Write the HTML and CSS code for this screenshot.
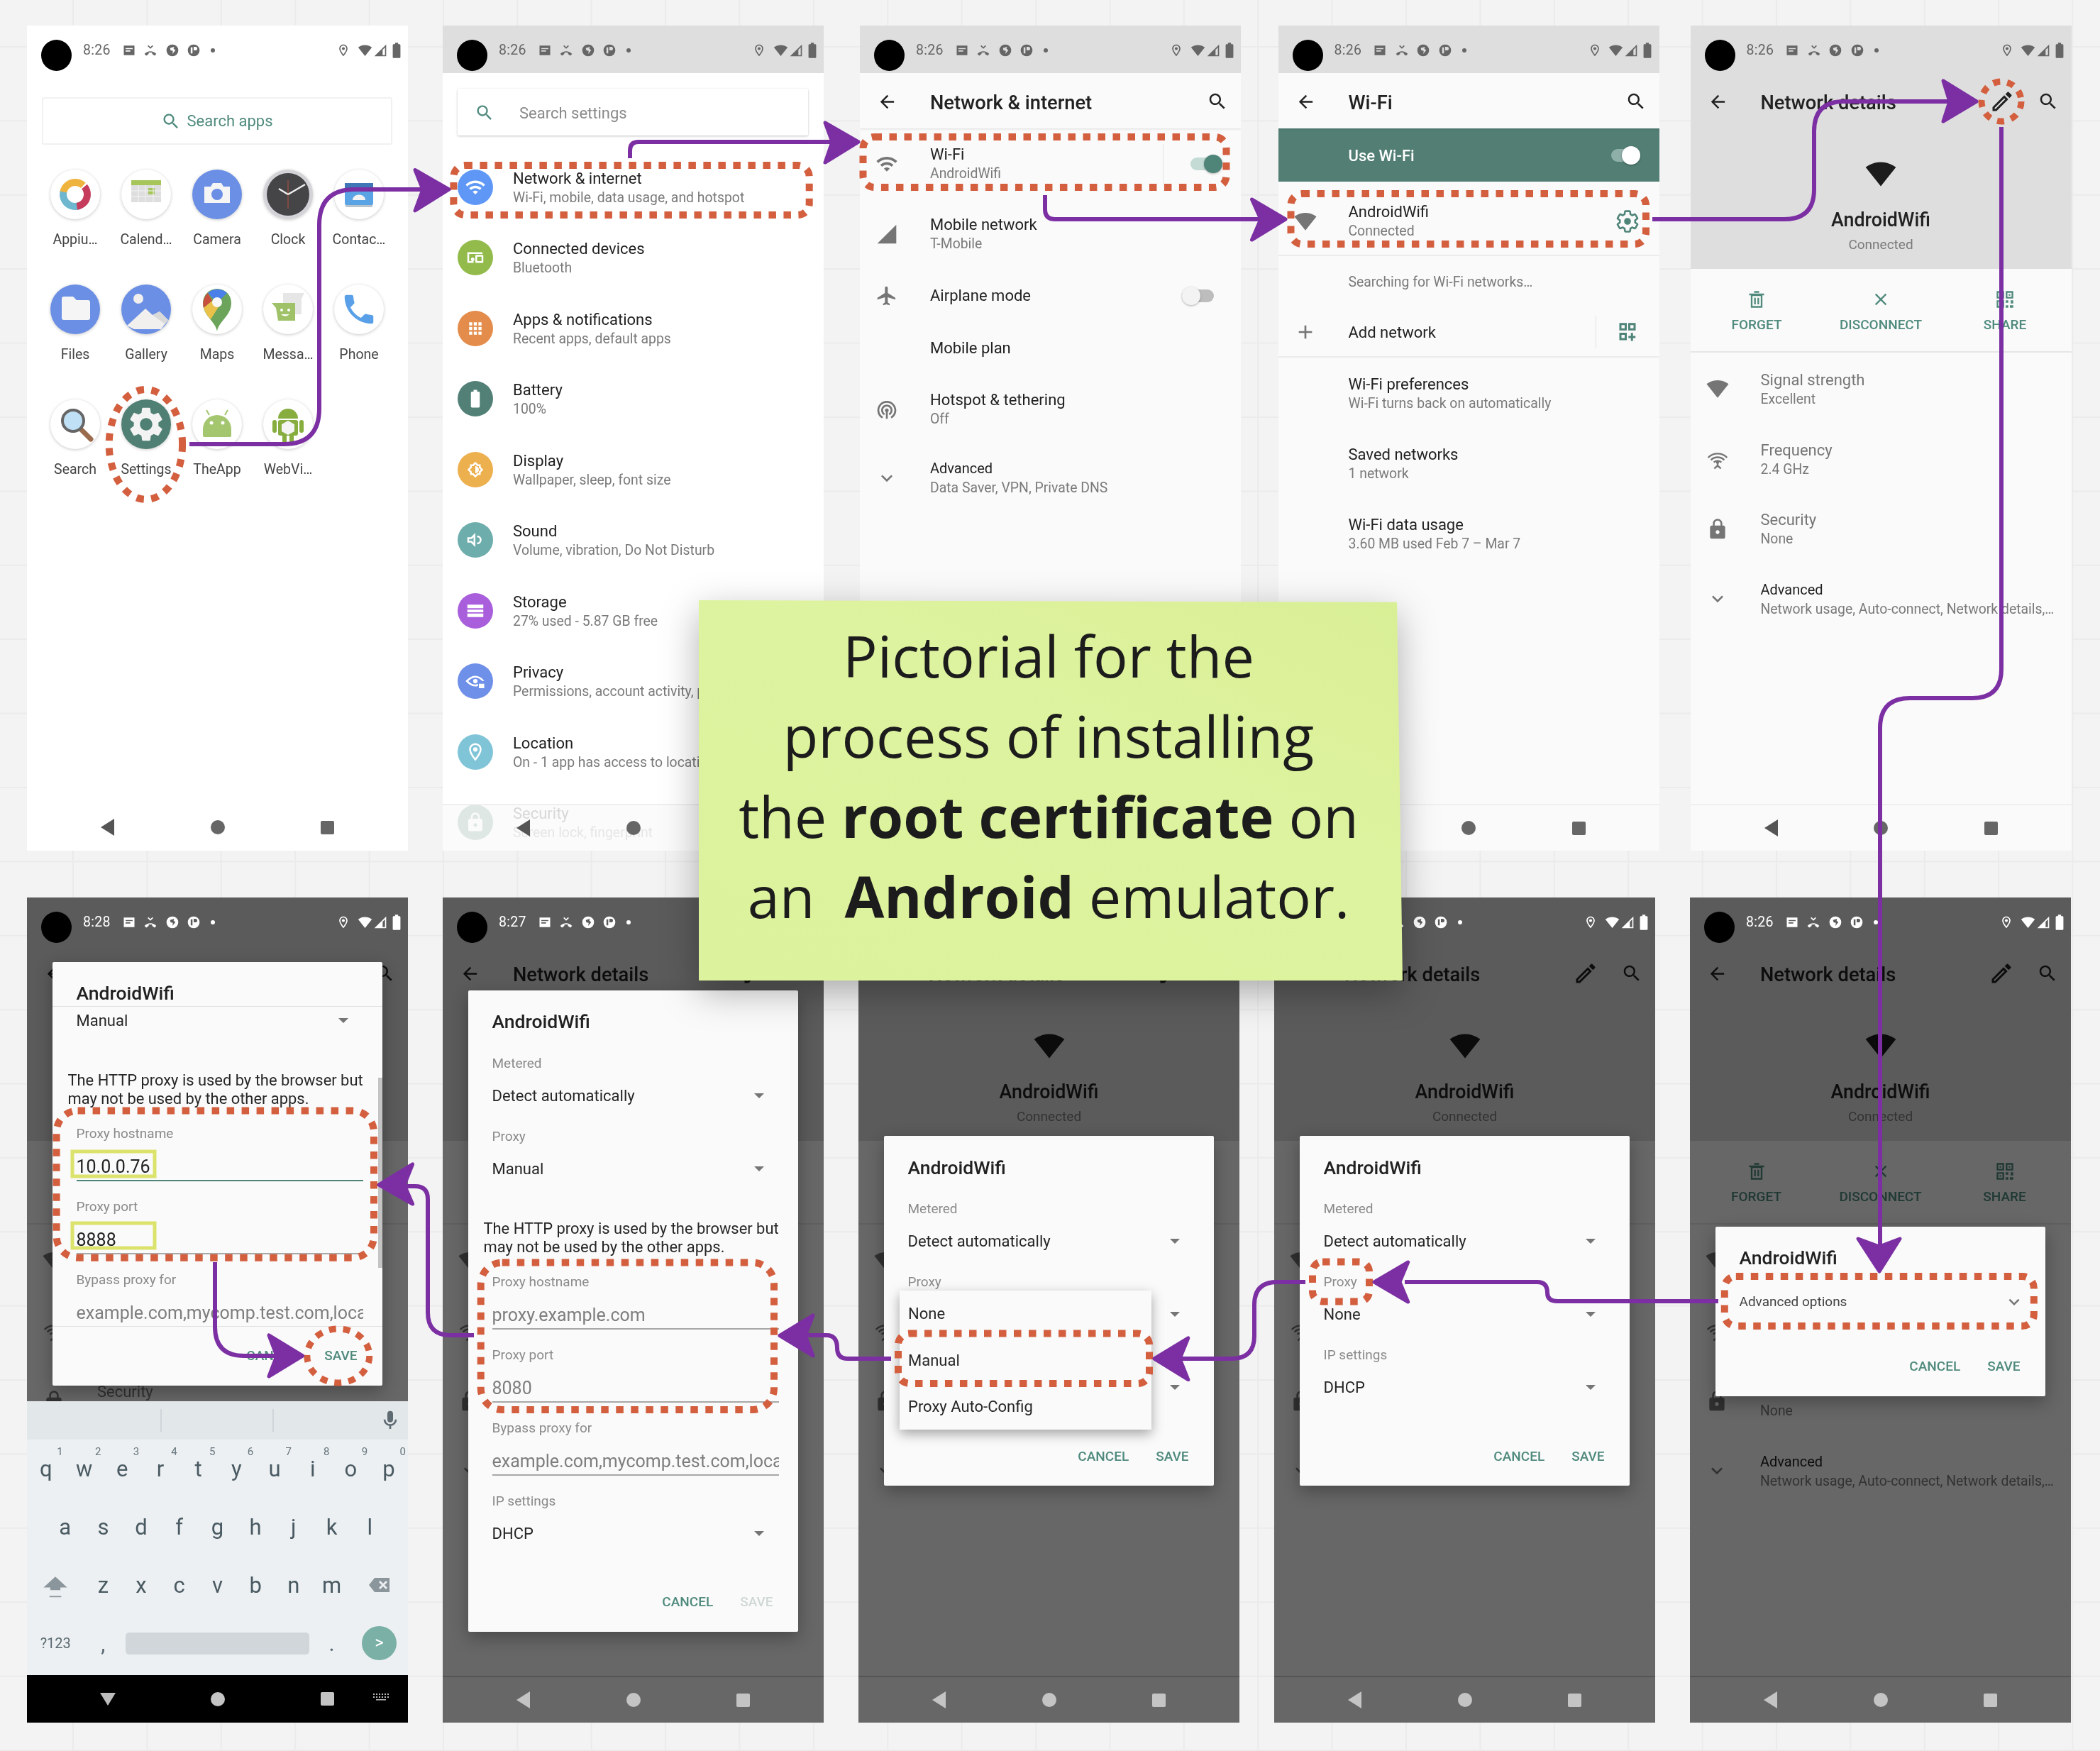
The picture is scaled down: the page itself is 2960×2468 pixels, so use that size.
FILE: index.html
```html
<!DOCTYPE html>
<html lang="en">

<head>
    <meta charset="UTF-8">
    <title>Pictorial: root certificate on an Android emulator</title>
    <link rel="stylesheet" href="styles.css">
</head>

<body>
    <svg class="defs" width="0" height="0">
        <symbol id="i-note" viewBox="0 0 24 24"><path fill-rule="evenodd" d="M3 4h18v16H3zM6 8v2h12V8zM6 12v2h8v-2z"/></symbol>
        <symbol id="i-missed" viewBox="0 0 24 24"><path d="M2 18c6-6 14-6 20 0l-3 3-4-3v-2c-2-.6-4-.6-6 0v2l-4 3z"/><path d="M8 4l4 4 4-4" fill="none" stroke="currentColor" stroke-width="2"/></symbol>
        <symbol id="i-swirl" viewBox="0 0 24 24"><path fill-rule="evenodd" d="M12 2a10 10 0 1 0 0 20 10 10 0 0 0 0-20zM8 8l7-2-1 3 3 3-5 6 1-5-4-1z"/></symbol>
        <symbol id="i-pie" viewBox="0 0 24 24"><path fill-rule="evenodd" d="M12 2a10 10 0 1 0 0 20 10 10 0 0 0 0-20zM7 7h3v10H7zM12 6h3a3 3 0 0 1 0 6h-3z"/></symbol>
        <symbol id="i-pin" viewBox="0 0 24 24"><path d="M12 2C8.13 2 5 5.13 5 9c0 5.25 7 13 7 13s7-7.75 7-13c0-3.87-3.13-7-7-7zm0 2c2.76 0 5 2.24 5 5 0 2.88-2.88 7.19-5 9.88C9.92 16.21 7 11.85 7 9c0-2.76 2.24-5 5-5z"/><circle cx="12" cy="9" r="2.5"/></symbol>
        <symbol id="i-wifi4" viewBox="0 0 24 24"><path d="M12.01 21.49L23.64 7c-.45-.34-4.93-4-11.64-4C5.28 3 .81 6.66.36 7l11.63 14.49.01.01.01-.01z"/></symbol>
        <symbol id="i-cell" viewBox="0 0 24 24"><path fill-rule="evenodd" d="M2 22h20V2zM16 20h4V7l-4 4z"/></symbol>
        <symbol id="i-cellfull" viewBox="0 0 24 24"><path d="M2 22h20V2z"/></symbol>
        <symbol id="i-batt" viewBox="0 0 24 24"><path d="M15.67 4H14V2h-4v2H8.33C7.6 4 7 4.6 7 5.33v15.33C7 21.4 7.6 22 8.33 22h7.33c.74 0 1.34-.6 1.34-1.33V5.33C17 4.6 16.4 4 15.67 4z"/></symbol>
        <symbol id="i-search" viewBox="0 0 24 24"><path d="M15.5 14h-.79l-.28-.27C15.41 12.59 16 11.11 16 9.5 16 5.91 13.09 3 9.5 3S3 5.91 3 9.5 5.91 16 9.5 16c1.61 0 3.09-.59 4.23-1.57l.27.28v.79l5 4.99L20.49 19l-4.99-5zm-6 0C7.01 14 5 11.99 5 9.5S7.01 5 9.5 5 14 7.01 14 9.5 11.99 14 9.5 14z"/></symbol>
        <symbol id="i-back" viewBox="0 0 24 24"><path d="M20 11H7.83l5.59-5.59L12 4l-8 8 8 8 1.41-1.41L7.83 13H20v-2z"/></symbol>
        <symbol id="i-gear" viewBox="0 0 24 24"><path fill-rule="evenodd" d="M19.14 12.94c.04-.3.06-.61.06-.94 0-.32-.02-.64-.07-.94l2.03-1.58c.18-.14.23-.41.12-.61l-1.92-3.32c-.12-.22-.37-.29-.59-.22l-2.39.96c-.5-.38-1.03-.7-1.62-.94l-.36-2.54c-.04-.24-.24-.41-.48-.41h-3.84c-.24 0-.43.17-.47.41l-.36 2.54c-.59.24-1.13.57-1.62.94l-2.39-.96c-.22-.08-.47 0-.59.22L2.74 8.87c-.12.21-.08.47.12.61l2.03 1.58c-.05.3-.09.63-.09.94s.02.64.07.94l-2.03 1.58c-.18.14-.23.41-.12.61l1.92 3.32c.12.22.37.29.59.22l2.39-.96c.5.38 1.03.7 1.62.94l.36 2.54c.05.24.24.41.48.41h3.84c.24 0 .44-.17.47-.41l.36-2.54c.59-.24 1.13-.56 1.62-.94l2.39.96c.22.08.47 0 .59-.22l1.92-3.32c.12-.22.07-.47-.12-.61l-2.01-1.58zM12 15.6c-1.98 0-3.6-1.62-3.6-3.6s1.62-3.6 3.6-3.6 3.6 1.62 3.6 3.6-1.62 3.6-3.6 3.6z"/></symbol>
        <symbol id="i-gearline" viewBox="0 0 24 24"><path d="M19.14 12.94c.04-.3.06-.61.06-.94 0-.32-.02-.64-.07-.94l2.03-1.58c.18-.14.23-.41.12-.61l-1.92-3.32c-.12-.22-.37-.29-.59-.22l-2.39.96c-.5-.38-1.03-.7-1.62-.94l-.36-2.54c-.04-.24-.24-.41-.48-.41h-3.84c-.24 0-.43.17-.47.41l-.36 2.54c-.59.24-1.13.57-1.62.94l-2.39-.96c-.22-.08-.47 0-.59.22L2.74 8.87c-.12.21-.08.47.12.61l2.03 1.58c-.05.3-.09.63-.09.94s.02.64.07.94l-2.03 1.58c-.18.14-.23.41-.12.61l1.92 3.32c.12.22.37.29.59.22l2.39-.96c.5.38 1.03.7 1.62.94l.36 2.54c.05.24.24.41.48.41h3.84c.24 0 .44-.17.47-.41l.36-2.54c.59-.24 1.13-.56 1.62-.94l2.39.96c.22.08.47 0 .59-.22l1.92-3.32c.12-.22.07-.47-.12-.61l-2.01-1.58z" fill="none" stroke="currentColor" stroke-width="1.7"/><circle cx="12" cy="12" r="3.2"/></symbol>
        <symbol id="i-edit" viewBox="0 0 24 24"><path d="M14.06 9.02l.92.92L5.92 19H5v-.92l9.06-9.06M17.66 3c-.25 0-.51.1-.7.29l-1.83 1.83 3.75 3.75 1.83-1.83c.39-.39.39-1.02 0-1.41l-2.34-2.34c-.2-.2-.45-.29-.71-.29zm-3.6 3.19L3 17.25V21h3.75L17.81 9.94l-3.75-3.75z"/></symbol>
        <symbol id="i-trash" viewBox="0 0 24 24"><path d="M6 7h12v14H6zM3 6h18M9 3h6M10 10v8M14 10v8" fill="none" stroke="currentColor" stroke-width="2"/></symbol>
        <symbol id="i-close" viewBox="0 0 24 24"><path d="M19 6.41L17.59 5 12 10.59 6.41 5 5 6.41 10.59 12 5 17.59 6.41 19 12 13.41 17.59 19 19 17.59 13.41 12z"/></symbol>
        <symbol id="i-qr" viewBox="0 0 24 24"><path d="M3 3h7v7H3zM14 3h7v7h-7zM3 14h7v7H3z" fill="none" stroke="currentColor" stroke-width="2"/><path d="M5.5 5.5h2v2h-2zM16.500 5.5h2v2h-2zM5.5 16.5h2v2h-2zM13 13h3v3h-3zM19 13h3v4h-3zM13 19h3v3h-3zM18 19h4v3h-4z"/></symbol>
        <symbol id="i-qradd" viewBox="0 0 24 24"><path d="M4 3h6v6H4zM14 3h6v6h-6zM4 14h6v6H4zM17 13v9M13 17.500h8" fill="none" stroke="currentColor" stroke-width="2.4"/></symbol>
        <symbol id="i-lock" viewBox="0 0 24 24"><path d="M18 8h-1V6c0-2.76-2.24-5-5-5S7 3.24 7 6v2H6c-1.1 0-2 .9-2 2v10c0 1.1.9 2 2 2h12c1.1 0 2-.9 2-2V10c0-1.1-.9-2-2-2zm-6 9c-1.1 0-2-.9-2-2s.9-2 2-2 2 .9 2 2-.9 2-2 2zm3.1-9H8.9V6c0-1.71 1.39-3.1 3.1-3.1 1.71 0 3.1 1.39 3.1 3.1v2z"/></symbol>
        <symbol id="i-plane" viewBox="0 0 24 24"><path d="M21 16v-2l-8-5V3.5c0-.83-.67-1.500-1.500-1.500S10 2.670 10 3.5V9l-8 5v2l8-2.5V19l-2 1.5V22l3.5-1 3.5 1v-1.5L13 19v-5.500l8 2.500z"/></symbol>
        <symbol id="i-chev" viewBox="0 0 24 24"><path d="M16.59 8.59L12 13.17 7.41 8.59 6 10l6 6 6-6z"/></symbol>
        <symbol id="i-wifi" viewBox="0 0 24 24"><path d="M1 9l2 2c4.97-4.97 13.03-4.97 18 0l2-2C16.93 2.93 7.08 2.93 1 9zm8 8l3 3 3-3c-1.65-1.66-4.34-1.66-6 0zm-4-4l2 2c2.76-2.76 7.24-2.76 10 0l2-2C15.14 9.14 8.87 9.14 5 13z"/></symbol>
        <symbol id="i-plus" viewBox="0 0 24 24"><path d="M19 13h-6v6h-2v-6H5v-2h6V5h2v6h6v2z"/></symbol>
        <symbol id="i-hotspot" viewBox="0 0 24 24"><path d="M12 11c-1.1 0-2 .9-2 2 0 .74.4 1.38 1 1.72V22h2v-7.28c.6-.35 1-.98 1-1.72 0-1.1-.9-2-2-2zm-6 2c0 2.22 1.21 4.15 3 5.19l1-1.74c-1.19-.7-2-1.97-2-3.45 0-2.21 1.79-4 4-4s4 1.79 4 4c0 1.48-.81 2.75-2 3.45l1 1.74c1.79-1.04 3-2.97 3-5.19 0-3.31-2.69-6-6-6s-6 2.69-6 6zm6-10C6.48 3 2 7.48 2 13c0 3.7 2.01 6.92 4.99 8.65l1-1.73C5.61 18.53 4 15.96 4 13c0-4.42 3.58-8 8-8s8 3.58 8 8c0 2.96-1.61 5.53-4 6.92l1 1.73c2.99-1.73 5-4.95 5-8.65 0-5.52-4.48-10-10-10z"/></symbol>
        <symbol id="i-freq" viewBox="0 0 24 24"><path d="M2 10.500a14 14 0 0 1 20 0M5 13a10 10 0 0 1 14 0M8 15.500a6 6 0 0 1 8 0" fill="none" stroke="currentColor" stroke-width="1.8"/><circle cx="12" cy="15.500" r="1.600"/><path d="M12 16v3M8.500 22l3.500-3 3.500 3" fill="none" stroke="currentColor" stroke-width="1.800"/></symbol>
        <symbol id="i-phone" viewBox="0 0 24 24"><path d="M6.62 10.79c1.44 2.83 3.76 5.14 6.59 6.59l2.2-2.2c.27-.27.67-.36 1.02-.24 1.12.37 2.33.57 3.57.57.55 0 1 .45 1 1V20c0 .55-.45 1-1 1-9.39 0-17-7.61-17-17 0-.55.45-1 1-1h3.5c.55 0 1 .45 1 1 0 1.25.2 2.45.57 3.57.11.35.03.74-.25 1.02l-2.2 2.2z"/></symbol>
    </svg>

    <main class="board">
        <div class="band band-top">

            <!-- apps -->
            <section class="phone">
                <div class="status">
                    <i class="cam"></i><span class="time">8:26</span>
                    <svg class="si si-first"><use href="#i-note"/></svg><svg class="si"><use href="#i-missed"/></svg><svg class="si"><use href="#i-swirl"/></svg><svg class="si"><use href="#i-pie"/></svg><i class="bullet"></i>
                    <svg class="si si-pin"><use href="#i-pin"/></svg><svg class="si si-wifi"><use href="#i-wifi4"/></svg><svg class="si si-cell"><use href="#i-cell"/></svg><svg class="si si-batt"><use href="#i-batt"/></svg>
                </div>
                <div class="app-search"><svg class="app-search-ico"><use href="#i-search"/></svg>Search apps</div>
                <div class="apps">
                    <div class="app"><span class="disc"><svg viewBox="0 0 70 70"><circle cx="35" cy="35" r="17" fill="none" stroke="#efb43f" stroke-width="10" stroke-dasharray="36 71" transform="rotate(190 35 35)"/><circle cx="35" cy="35" r="17" fill="none" stroke="#6fb6cf" stroke-width="10" stroke-dasharray="36 71" transform="rotate(70 35 35)"/><circle cx="35" cy="35" r="17" fill="none" stroke="#c53c5c" stroke-width="10" stroke-dasharray="36 71" transform="rotate(320 35 35)"/></svg></span><span>Appiu…</span></div>
                    <div class="app"><span class="disc"><svg viewBox="0 0 70 70"><rect x="14" y="15" width="42" height="31" fill="#dedede"/><rect x="14" y="15" width="42" height="7" fill="#a6c65a"/><rect x="38" y="26" width="9" height="9" fill="#a6c65a"/><path d="M14 30h42M14 38h42M24 22v24M34 22v24M45 22v24" stroke="#f4f4f4"/></svg></span><span>Calend…</span></div>
                    <div class="app"><span class="disc disc-blue"><svg viewBox="0 0 70 70"><path d="M17 24h9l3-5h12l3 5h9v23H17z" fill="#f5f5f5"/><circle cx="35" cy="35" r="8" fill="#6a8fe5"/></svg></span><span>Camera</span></div>
                    <div class="app"><span class="disc disc-clock"><svg viewBox="0 0 70 70"><circle cx="35" cy="35" r="30" fill="#454548"/><path d="M35 15v40" stroke="#b5533c"/><path d="M35 35l24-14M35 35L22 27" stroke="#eee" stroke-width="2.5"/></svg></span><span>Clock</span></div>
                    <div class="app"><span class="disc"><svg viewBox="0 0 70 70"><rect x="15" y="19" width="40" height="31" rx="2" fill="#5aa3e4"/><rect x="15" y="19" width="40" height="12" fill="#3f76b8"/><path d="M26 43c0-10 18-10 18 0z" fill="#f3f3f3"/><rect x="16" y="50" width="38" height="3" fill="#b9c4cc"/></svg></span><span>Contac…</span></div>

                    <div class="app"><span class="disc disc-blue"><svg viewBox="0 0 70 70"><path d="M16 20q0-3 3-3h13l5 5h16q3 0 3 3v22q0 3-3 3H19q-3 0-3-3z" fill="#f5f5f5"/></svg></span><span>Files</span></div>
                    <div class="app"><span class="disc disc-blue"><svg viewBox="0 0 70 70"><circle cx="24" cy="20" r="7" fill="#f2f0ee"/><path d="M8 58l26-24 10 9 10-5 12 12-10 13H18z" fill="#f2f0ee"/><path d="M44 43l10-5 12 12-4 6z" fill="#d9d9d9"/></svg></span><span>Gallery</span></div>
                    <div class="app"><span class="disc"><svg viewBox="0 0 70 70"><path d="M35 66C33 52 15 44 15 26a20 20 0 0 1 40 0C55 44 37 52 35 66z" fill="#6ba45a"/><path d="M22 12a20 20 0 0 1 27 0L35 26z" fill="#4a80e8"/><path d="M22 12C16 18 14 26 16 33l12-10z" fill="#c7503f"/><path d="M16 33c2 6 6 12 10 16l14-22-12-4z" fill="#eac24a"/><circle cx="35" cy="25" r="7" fill="#f8f8f8"/></svg></span><span>Maps</span></div>
                    <div class="app"><span class="disc"><svg viewBox="0 0 70 70"><path d="M28 12h30l-4 8v22H28z" fill="#e6e6e6"/><path d="M12 26h33v25H21l-3-18z" fill="#9fc268"/><circle cx="26" cy="36" r="2" fill="#fff"/><circle cx="36" cy="36" r="2" fill="#fff"/><path d="M25 42q6 5 12 0z" fill="#fff"/></svg></span><span>Messa…</span></div>
                    <div class="app"><span class="disc"><svg viewBox="0 0 24 24" class="phone-glyph"><use href="#i-phone"/></svg></span><span>Phone</span></div>

                    <div class="app"><span class="disc"><svg viewBox="0 0 70 70"><path d="M43 42l14 14" stroke="#9a6b4d" stroke-width="7" stroke-linecap="round"/><circle cx="32" cy="30" r="15" fill="#bfe0f5" stroke="#666" stroke-width="4"/></svg></span><span>Search</span></div>
                    <div class="app"><span class="disc disc-teal"><svg viewBox="0 0 24 24" class="gear-glyph"><use href="#i-gear"/></svg></span><span>Settings</span></div>
                    <div class="app"><span class="disc"><svg viewBox="0 0 70 70"><path d="M15 42a20 20 0 0 1 40 0v9q0 2-2 2H17q-2 0-2-2z" fill="#a4c66f"/><path d="M24 22l-4-7M46 22l4-7" stroke="#a4c66f" stroke-width="2"/><circle cx="27" cy="33" r="2.5" fill="#fff"/><circle cx="43" cy="33" r="2.5" fill="#fff"/></svg></span><span>TheApp</span></div>
                    <div class="app"><span class="disc"><svg viewBox="0 0 70 70"><path d="M21 27a14 14 0 0 1 28 0z" fill="#86ad3e"/><rect x="21" y="29" width="28" height="22" rx="3" fill="#86ad3e"/><rect x="13" y="29" width="6" height="18" rx="3" fill="#86ad3e"/><rect x="51" y="29" width="6" height="18" rx="3" fill="#86ad3e"/><rect x="27" y="51" width="6" height="9" fill="#86ad3e"/><rect x="37" y="51" width="6" height="9" fill="#86ad3e"/><path d="M35 30l9 5v10l-9 5-9-5V35z" fill="#f4f4f4"/></svg></span><span>WebVi…</span></div>
                </div>
                <div class="nav"><i class="nav-back"></i><i class="nav-home"></i><i class="nav-recent"></i></div>
            </section>

            <!-- settings -->
            <section class="phone gap-a">
                <div class="status tinted">
                    <i class="cam"></i><span class="time">8:26</span>
                    <svg class="si si-first"><use href="#i-note"/></svg><svg class="si"><use href="#i-missed"/></svg><svg class="si"><use href="#i-swirl"/></svg><svg class="si"><use href="#i-pie"/></svg><i class="bullet"></i>
                    <svg class="si si-pin"><use href="#i-pin"/></svg><svg class="si si-wifi"><use href="#i-wifi4"/></svg><svg class="si si-cell"><use href="#i-cell"/></svg><svg class="si si-batt"><use href="#i-batt"/></svg>
                </div>
                <div class="set-search"><svg class="set-search-ico"><use href="#i-search"/></svg>Search settings</div>
                <div class="set-list">
                    <div class="set-row"><span class="round c-net"><svg><use href="#i-wifi"/></svg></span><div><div class="ttl">Network &amp; internet</div><div class="sub">Wi-Fi, mobile, data usage, and hotspot</div></div></div>
                    <div class="set-row"><span class="round c-dev"><svg viewBox="0 0 24 24"><path d="M3 6h17v2H5v8h5v2H3zM13 9h7q1 0 1 1v7q0 1-1 1h-7q-1 0-1-1v-7q0-1 1-1zm1 2v5h5v-5zM9 12a2 2 0 1 1 0 4 2 2 0 0 1 0-4z"/></svg></span><div><div class="ttl">Connected devices</div><div class="sub">Bluetooth</div></div></div>
                    <div class="set-row"><span class="round c-app"><svg viewBox="0 0 24 24"><path d="M5 5h3.5v3.5H5zM10.25 5h3.5v3.5h-3.5zM15.5 5H19v3.5h-3.5zM5 10.25h3.5v3.5H5zM10.25 10.25h3.5v3.5h-3.5zM15.5 10.25H19v3.5h-3.5zM5 15.5h3.5V19H5zM10.25 15.5h3.5V19h-3.5zM15.5 15.5H19V19h-3.5z"/></svg></span><div><div class="ttl">Apps &amp; notifications</div><div class="sub">Recent apps, default apps</div></div></div>
                    <div class="set-row"><span class="round c-bat"><svg><use href="#i-batt"/></svg></span><div><div class="ttl">Battery</div><div class="sub">100%</div></div></div>
                    <div class="set-row"><span class="round c-dis"><svg viewBox="0 0 24 24"><path fill-rule="evenodd" d="M12 3l3 3h3v3l3 3-3 3v3h-3l-3 3-3-3H6v-3l-3-3 3-3V6h3zM12 5.8L9.8 8H8v1.8L5.8 12 8 14.2V16h1.8l2.2 2.2 2.2-2.2H16v-1.800l2.200-2.200L16 9.800V8h-1.800z"/><path d="M12 8v8a4 4 0 0 0 0-8z"/></svg></span><div><div class="ttl">Display</div><div class="sub">Wallpaper, sleep, font size</div></div></div>
                    <div class="set-row"><span class="round c-snd"><svg viewBox="0 0 24 24"><path fill-rule="evenodd" d="M3 9v6h4l5 5V4L7 9zM5 11h3l2-2v6l-2-2H5z"/><path d="M14 7a5 5 0 0 1 0 10v-2a3 3 0 0 0 0-6z"/></svg></span><div><div class="ttl">Sound</div><div class="sub">Volume, vibration, Do Not Disturb</div></div></div>
                    <div class="set-row"><span class="round c-sto"><svg viewBox="0 0 24 24"><path d="M3 5h18v4H3zM3 10.5h18v3H3zM3 15h18v4H3z"/></svg></span><div><div class="ttl">Storage</div><div class="sub">27% used - 5.87 GB free</div></div></div>
                    <div class="set-row"><span class="round c-pri"><svg viewBox="0 0 24 24"><path fill-rule="evenodd" d="M12 6c-5 0-9 4-11 6 2 2 6 6 11 6 1 0 2-.1 3-.5V15l-3 1c-3 0-6-2-8-4 2-2 5-4 8-4 3 0 6 2 8 4l2-.5C20 9 16 6 12 6z"/><circle cx="12" cy="12" r="2.5"/><rect x="16" y="15" width="6" height="5"/></svg></span><div><div class="ttl">Privacy</div><div class="sub">Permissions, account activity, personal data</div></div></div>
                    <div class="set-row"><span class="round c-loc"><svg><use href="#i-pin"/></svg></span><div><div class="ttl">Location</div><div class="sub">On - 1 app has access to location</div></div></div>
                    <div class="set-row"><span class="round c-sec"><svg><use href="#i-lock"/></svg></span><div><div class="ttl">Security</div><div class="sub">Screen lock, fingerprint</div></div></div>
                </div>
                <div class="nav nav-veil"><i class="nav-back"></i><i class="nav-home"></i><i class="nav-recent"></i></div>
            </section>

            <!-- network & internet -->
            <section class="phone gap-b">
                <div class="status tinted">
                    <i class="cam"></i><span class="time">8:26</span>
                    <svg class="si si-first"><use href="#i-note"/></svg><svg class="si"><use href="#i-missed"/></svg><svg class="si"><use href="#i-swirl"/></svg><svg class="si"><use href="#i-pie"/></svg><i class="bullet"></i>
                    <svg class="si si-pin"><use href="#i-pin"/></svg><svg class="si si-wifi"><use href="#i-wifi4"/></svg><svg class="si si-cell"><use href="#i-cell"/></svg><svg class="si si-batt"><use href="#i-batt"/></svg>
                </div>
                <div class="bar"><svg class="bar-ico"><use href="#i-back"/></svg><span class="bar-title">Network &amp; internet</span><svg class="bar-ico bar-last"><use href="#i-search"/></svg></div>
                <div class="row"><span class="lead"><svg><use href="#i-wifi"/></svg></span><div><div class="ttl">Wi-Fi</div><div class="sub">AndroidWifi</div></div><i class="vline"></i><span class="toggle toggle-on"><b></b></span></div>
                <div class="row"><span class="lead"><svg><use href="#i-cellfull"/></svg></span><div><div class="ttl">Mobile network</div><div class="sub">T-Mobile</div></div></div>
                <div class="row row-one"><span class="lead"><svg><use href="#i-plane"/></svg></span><div class="ttl">Airplane mode</div><span class="toggle toggle-off"><b></b></span></div>
                <div class="row row-one"><span class="lead"></span><div class="ttl">Mobile plan</div></div>
                <div class="row"><span class="lead"><svg><use href="#i-hotspot"/></svg></span><div><div class="ttl">Hotspot &amp; tethering</div><div class="sub">Off</div></div></div>
                <div class="row row-adv"><span class="lead"><svg><use href="#i-chev"/></svg></span><div><div class="ttl adv">Advanced</div><div class="sub">Data Saver, VPN, Private DNS</div></div></div>
                <div class="nav"><i class="nav-back"></i><i class="nav-home"></i><i class="nav-recent"></i></div>
            </section>

            <!-- wi-fi -->
            <section class="phone gap-c">
                <div class="status tinted">
                    <i class="cam"></i><span class="time">8:26</span>
                    <svg class="si si-first"><use href="#i-note"/></svg><svg class="si"><use href="#i-missed"/></svg><svg class="si"><use href="#i-swirl"/></svg><svg class="si"><use href="#i-pie"/></svg><i class="bullet"></i>
                    <svg class="si si-pin"><use href="#i-pin"/></svg><svg class="si si-wifi"><use href="#i-wifi4"/></svg><svg class="si si-cell"><use href="#i-cell"/></svg><svg class="si si-batt"><use href="#i-batt"/></svg>
                </div>
                <div class="bar"><svg class="bar-ico"><use href="#i-back"/></svg><span class="bar-title">Wi-Fi</span><svg class="bar-ico bar-last"><use href="#i-search"/></svg></div>
                <div class="use-wifi"><span>Use Wi-Fi</span><span class="toggle toggle-white"><b></b></span></div>
                <div class="row row-conn"><span class="lead"><svg><use href="#i-wifi4"/></svg></span><div><div class="ttl">AndroidWifi</div><div class="sub">Connected</div></div><svg class="teal-ico gear-end"><use href="#i-gearline"/></svg></div>
                <div class="row row-note"><span class="lead"></span><div class="sub">Searching for Wi-Fi networks…</div></div>
                <div class="row row-add"><span class="lead"><svg><use href="#i-plus"/></svg></span><div class="ttl">Add network</div><i class="vline vline-add"></i><svg class="teal-ico"><use href="#i-qradd"/></svg></div>
                <div class="row"><span class="lead"></span><div><div class="ttl">Wi-Fi preferences</div><div class="sub">Wi-Fi turns back on automatically</div></div></div>
                <div class="row"><span class="lead"></span><div><div class="ttl">Saved networks</div><div class="sub">1 network</div></div></div>
                <div class="row"><span class="lead"></span><div><div class="ttl">Wi-Fi data usage</div><div class="sub">3.60 MB used Feb 7 – Mar 7</div></div></div>
                <div class="nav"><i class="nav-back"></i><i class="nav-home"></i><i class="nav-recent"></i></div>
            </section>

            <!-- network details -->
            <section class="phone gap-d">
                <div class="hero">
                    <div class="status">
                        <i class="cam"></i><span class="time">8:26</span>
                        <svg class="si si-first"><use href="#i-note"/></svg><svg class="si"><use href="#i-missed"/></svg><svg class="si"><use href="#i-swirl"/></svg><svg class="si"><use href="#i-pie"/></svg><i class="bullet"></i>
                        <svg class="si si-pin"><use href="#i-pin"/></svg><svg class="si si-wifi"><use href="#i-wifi4"/></svg><svg class="si si-cell"><use href="#i-cell"/></svg><svg class="si si-batt"><use href="#i-batt"/></svg>
                    </div>
                    <div class="bar bar-flat"><svg class="bar-ico"><use href="#i-back"/></svg><span class="bar-title">Network details</span><svg class="bar-ico bar-edit"><use href="#i-edit"/></svg><svg class="bar-ico bar-last"><use href="#i-search"/></svg></div>
                    <svg class="hero-ico"><use href="#i-wifi4"/></svg>
                    <div class="hero-name">AndroidWifi</div>
                    <div class="hero-state">Connected</div>
                </div>
                <div class="actions">
                    <div class="action"><svg><use href="#i-trash"/></svg>FORGET</div>
                    <div class="action"><svg><use href="#i-close"/></svg>DISCONNECT</div>
                    <div class="action"><svg><use href="#i-qr"/></svg>SHARE</div>
                </div>
                <div class="facts">
                    <div class="fact"><span class="lead"><svg><use href="#i-wifi4"/></svg></span><div><div class="ttl muted">Signal strength</div><div class="sub">Excellent</div></div></div>
                    <div class="fact"><span class="lead"><svg><use href="#i-freq"/></svg></span><div><div class="ttl muted">Frequency</div><div class="sub">2.4 GHz</div></div></div>
                    <div class="fact"><span class="lead"><svg><use href="#i-lock"/></svg></span><div><div class="ttl muted">Security</div><div class="sub">None</div></div></div>
                    <div class="fact"><span class="lead"><svg><use href="#i-chev"/></svg></span><div><div class="ttl adv">Advanced</div><div class="sub">Network usage, Auto-connect, Network details,…</div></div></div>
                </div>
                <div class="nav"><i class="nav-back"></i><i class="nav-home"></i><i class="nav-recent"></i></div>
            </section>
        </div>

        <div class="band band-bottom">

            <!-- proxy typed in, keyboard up -->
            <section class="phone dim">
                <div class="hero">
                    <div class="status">
                        <i class="cam"></i><span class="time">8:28</span>
                        <svg class="si si-first"><use href="#i-note"/></svg><svg class="si"><use href="#i-missed"/></svg><svg class="si"><use href="#i-swirl"/></svg><svg class="si"><use href="#i-pie"/></svg><i class="bullet"></i>
                        <svg class="si si-pin"><use href="#i-pin"/></svg><svg class="si si-wifi"><use href="#i-wifi4"/></svg><svg class="si si-cell"><use href="#i-cell"/></svg><svg class="si si-batt"><use href="#i-batt"/></svg>
                    </div>
                    <div class="bar bar-flat"><svg class="bar-ico"><use href="#i-back"/></svg><span class="bar-title">Network details</span><svg class="bar-ico bar-edit"><use href="#i-edit"/></svg><svg class="bar-ico bar-last"><use href="#i-search"/></svg></div>
                </div>
                <div class="facts facts-low">
                    <div class="fact"><span class="lead"><svg><use href="#i-wifi4"/></svg></span></div>
                    <div class="fact"><span class="lead"><svg><use href="#i-freq"/></svg></span></div>
                    <div class="fact"><span class="lead"><svg><use href="#i-lock"/></svg></span><div><div class="ttl muted">Security</div><div class="sub">None</div></div></div>
                </div>
                <i class="scrim"></i>
                <div class="dialog dialog-typed">
                    <div class="dlg-title dlg-title-tight">AndroidWifi</div>
                    <i class="dlg-rule"></i>
                    <div class="dlg-value dlg-value-first"><span>Manual</span><i class="caret"></i></div>
                    <p class="dlg-text">The HTTP proxy is used by the browser but may not be used by the other apps.</p>
                    <div class="dlg-label">Proxy hostname</div>
                    <div class="field field-active">10.0.0.76</div>
                    <div class="dlg-label">Proxy port</div>
                    <div class="field">8888</div>
                    <div class="dlg-label">Bypass proxy for</div>
                    <div class="field field-hint field-open">example.com,mycomp.test.com,localhost</div>
                    <i class="dlg-rule dlg-rule-foot"></i>
                    <div class="dlg-actions"><span>CANCEL</span><span>SAVE</span></div>
                    <i class="dlg-scroll"></i>
                </div>
                <div class="keyboard">
                    <div class="kb-strip"><i></i><i></i><svg viewBox="0 0 24 24"><path d="M12 14a3 3 0 0 0 3-3V5a3 3 0 0 0-6 0v6a3 3 0 0 0 3 3zm5-3a5 5 0 0 1-10 0H5a7 7 0 0 0 6 6.9V21h2v-3.1A7 7 0 0 0 19 11z"/></svg></div>
                    <div class="kb-row">
                        <span class="key">q<sup>1</sup></span><span class="key">w<sup>2</sup></span><span class="key">e<sup>3</sup></span><span class="key">r<sup>4</sup></span><span class="key">t<sup>5</sup></span><span class="key">y<sup>6</sup></span><span class="key">u<sup>7</sup></span><span class="key">i<sup>8</sup></span><span class="key">o<sup>9</sup></span><span class="key">p<sup>0</sup></span>
                    </div>
                    <div class="kb-row kb-row-a">
                        <span class="key">a</span><span class="key">s</span><span class="key">d</span><span class="key">f</span><span class="key">g</span><span class="key">h</span><span class="key">j</span><span class="key">k</span><span class="key">l</span>
                    </div>
                    <div class="kb-row">
                        <span class="key key-wide"><svg viewBox="0 0 32 32" class="kb-shift"><path d="M16 6L2 19h8v3h12v-3h8z"/><path d="M9 29h14v1.5H9z"/></svg></span><span class="key">z</span><span class="key">x</span><span class="key">c</span><span class="key">v</span><span class="key">b</span><span class="key">n</span><span class="key">m</span><span class="key key-wide"><svg viewBox="0 0 32 24" class="kb-del"><path fill-rule="evenodd" d="M9 2h21v20H9L1 12zM15 8l4 4-4 4 2 2 4-4 4 4 2-2-4-4 4-4-2-2-4 4-4-4z"/></svg></span>
                    </div>
                    <div class="kb-row kb-row-last">
                        <span class="key key-sym">?123</span><span class="key">,</span><span class="kb-space"><i></i></span><span class="key">.</span><span class="key key-wide"><i class="kb-go">&gt;</i></span>
                    </div>
                </div>
                <div class="nav nav-black"><i class="nav-down"></i><i class="nav-home"></i><i class="nav-recent"></i><svg class="nav-kbd" viewBox="0 0 24 12"><path d="M1 1h2v2H1zM5 1h2v2H5zM9 1h2v2H9zM13 1h2v2h-2zM17 1h2v2h-2zM21 1h2v2h-2zM1 5h2v2H1zM5 5h2v2H5zM9 5h2v2H9zM13 5h2v2h-2zM17 5h2v2h-2zM21 5h2v2h-2zM5 9h14v1.5H5z"/></svg></div>
            </section>

            <!-- proxy set to manual -->
            <section class="phone dim">
                <div class="hero">
                    <div class="status">
                        <i class="cam"></i><span class="time">8:27</span>
                        <svg class="si si-first"><use href="#i-note"/></svg><svg class="si"><use href="#i-missed"/></svg><svg class="si"><use href="#i-swirl"/></svg><svg class="si"><use href="#i-pie"/></svg><i class="bullet"></i>
                        <svg class="si si-pin"><use href="#i-pin"/></svg><svg class="si si-wifi"><use href="#i-wifi4"/></svg><svg class="si si-cell"><use href="#i-cell"/></svg><svg class="si si-batt"><use href="#i-batt"/></svg>
                    </div>
                    <div class="bar bar-flat"><svg class="bar-ico"><use href="#i-back"/></svg><span class="bar-title">Network details</span><svg class="bar-ico bar-edit"><use href="#i-edit"/></svg><svg class="bar-ico bar-last"><use href="#i-search"/></svg></div>
                </div>
                <div class="facts facts-low">
                    <div class="fact"><span class="lead"><svg><use href="#i-wifi4"/></svg></span></div>
                    <div class="fact"><span class="lead"><svg><use href="#i-freq"/></svg></span></div>
                    <div class="fact"><span class="lead"><svg><use href="#i-lock"/></svg></span></div>
                    <div class="fact"><span class="lead"><svg><use href="#i-chev"/></svg></span></div>
                </div>
                <i class="scrim"></i>
                <div class="dialog dialog-long">
                    <div class="dlg-title">AndroidWifi</div>
                    <div class="dlg-label">Metered</div>
                    <div class="dlg-value"><span>Detect automatically</span><i class="caret"></i></div>
                    <div class="dlg-label dlg-next">Proxy</div>
                    <div class="dlg-value"><span>Manual</span><i class="caret"></i></div>
                    <p class="dlg-text">The HTTP proxy is used by the browser but may not be used by the other apps.</p>
                    <div class="dlg-label">Proxy hostname</div>
                    <div class="field field-hint">proxy.example.com</div>
                    <div class="dlg-label">Proxy port</div>
                    <div class="field field-hint">8080</div>
                    <div class="dlg-label">Bypass proxy for</div>
                    <div class="field field-hint">example.com,mycomp.test.com,localhost</div>
                    <div class="dlg-label">IP settings</div>
                    <div class="dlg-value"><span>DHCP</span><i class="caret"></i></div>
                    <div class="dlg-actions dlg-actions-off"><span>CANCEL</span><span>SAVE</span></div>
                </div>
                <div class="nav"><i class="nav-back"></i><i class="nav-home"></i><i class="nav-recent"></i></div>
            </section>

            <!-- proxy dropdown open -->
            <section class="phone dim">
                <div class="hero">
                    <div class="status">
                        <i class="cam"></i><span class="time">8:26</span>
                        <svg class="si si-first"><use href="#i-note"/></svg><svg class="si"><use href="#i-missed"/></svg><svg class="si"><use href="#i-swirl"/></svg><svg class="si"><use href="#i-pie"/></svg><i class="bullet"></i>
                        <svg class="si si-pin"><use href="#i-pin"/></svg><svg class="si si-wifi"><use href="#i-wifi4"/></svg><svg class="si si-cell"><use href="#i-cell"/></svg><svg class="si si-batt"><use href="#i-batt"/></svg>
                    </div>
                    <div class="bar bar-flat"><svg class="bar-ico"><use href="#i-back"/></svg><span class="bar-title">Network details</span><svg class="bar-ico bar-edit"><use href="#i-edit"/></svg><svg class="bar-ico bar-last"><use href="#i-search"/></svg></div>
                    <svg class="hero-ico"><use href="#i-wifi4"/></svg>
                    <div class="hero-name">AndroidWifi</div>
                    <div class="hero-state">Connected</div>
                </div>
                <div class="facts facts-low">
                    <div class="fact"><span class="lead"><svg><use href="#i-wifi4"/></svg></span></div>
                    <div class="fact"><span class="lead"><svg><use href="#i-freq"/></svg></span></div>
                    <div class="fact"><span class="lead"><svg><use href="#i-lock"/></svg></span></div>
                    <div class="fact"><span class="lead"><svg><use href="#i-chev"/></svg></span></div>
                </div>
                <i class="scrim"></i>
                <div class="dialog dialog-mid">
                    <div class="dlg-title">AndroidWifi</div>
                    <div class="dlg-label">Metered</div>
                    <div class="dlg-value"><span>Detect automatically</span><i class="caret"></i></div>
                    <div class="dlg-label dlg-next">Proxy</div>
                    <div class="dlg-value dlg-blank"><i class="caret"></i></div>
                    <div class="dlg-value dlg-value-hidden"><i class="caret"></i></div>
                    <div class="dlg-actions"><span>CANCEL</span><span>SAVE</span></div>
                    <div class="menu"><div>None</div><div>Manual</div><div>Proxy Auto-Config</div></div>
                </div>
                <div class="nav"><i class="nav-back"></i><i class="nav-home"></i><i class="nav-recent"></i></div>
            </section>

            <!-- proxy row picked -->
            <section class="phone dim">
                <div class="hero">
                    <div class="status">
                        <i class="cam"></i><span class="time">8:26</span>
                        <svg class="si si-first"><use href="#i-note"/></svg><svg class="si"><use href="#i-missed"/></svg><svg class="si"><use href="#i-swirl"/></svg><svg class="si"><use href="#i-pie"/></svg><i class="bullet"></i>
                        <svg class="si si-pin"><use href="#i-pin"/></svg><svg class="si si-wifi"><use href="#i-wifi4"/></svg><svg class="si si-cell"><use href="#i-cell"/></svg><svg class="si si-batt"><use href="#i-batt"/></svg>
                    </div>
                    <div class="bar bar-flat"><svg class="bar-ico"><use href="#i-back"/></svg><span class="bar-title">Network details</span><svg class="bar-ico bar-edit"><use href="#i-edit"/></svg><svg class="bar-ico bar-last"><use href="#i-search"/></svg></div>
                    <svg class="hero-ico"><use href="#i-wifi4"/></svg>
                    <div class="hero-name">AndroidWifi</div>
                    <div class="hero-state">Connected</div>
                </div>
                <div class="facts facts-low">
                    <div class="fact"><span class="lead"><svg><use href="#i-wifi4"/></svg></span></div>
                    <div class="fact"><span class="lead"><svg><use href="#i-freq"/></svg></span></div>
                    <div class="fact"><span class="lead"><svg><use href="#i-lock"/></svg></span></div>
                    <div class="fact"><span class="lead"><svg><use href="#i-chev"/></svg></span></div>
                </div>
                <i class="scrim"></i>
                <div class="dialog dialog-mid">
                    <div class="dlg-title">AndroidWifi</div>
                    <div class="dlg-label">Metered</div>
                    <div class="dlg-value"><span>Detect automatically</span><i class="caret"></i></div>
                    <div class="dlg-label dlg-next">Proxy</div>
                    <div class="dlg-value"><span>None</span><i class="caret"></i></div>
                    <div class="dlg-label dlg-next">IP settings</div>
                    <div class="dlg-value"><span>DHCP</span><i class="caret"></i></div>
                    <div class="dlg-actions"><span>CANCEL</span><span>SAVE</span></div>
                </div>
                <div class="nav"><i class="nav-back"></i><i class="nav-home"></i><i class="nav-recent"></i></div>
            </section>

            <!-- edit dialog -->
            <section class="phone dim">
                <div class="hero">
                    <div class="status">
                        <i class="cam"></i><span class="time">8:26</span>
                        <svg class="si si-first"><use href="#i-note"/></svg><svg class="si"><use href="#i-missed"/></svg><svg class="si"><use href="#i-swirl"/></svg><svg class="si"><use href="#i-pie"/></svg><i class="bullet"></i>
                        <svg class="si si-pin"><use href="#i-pin"/></svg><svg class="si si-wifi"><use href="#i-wifi4"/></svg><svg class="si si-cell"><use href="#i-cell"/></svg><svg class="si si-batt"><use href="#i-batt"/></svg>
                    </div>
                    <div class="bar bar-flat"><svg class="bar-ico"><use href="#i-back"/></svg><span class="bar-title">Network details</span><svg class="bar-ico bar-edit"><use href="#i-edit"/></svg><svg class="bar-ico bar-last"><use href="#i-search"/></svg></div>
                    <svg class="hero-ico"><use href="#i-wifi4"/></svg>
                    <div class="hero-name">AndroidWifi</div>
                    <div class="hero-state">Connected</div>
                </div>
                <div class="actions">
                    <div class="action"><svg><use href="#i-trash"/></svg>FORGET</div>
                    <div class="action"><svg><use href="#i-close"/></svg>DISCONNECT</div>
                    <div class="action"><svg><use href="#i-qr"/></svg>SHARE</div>
                </div>
                <div class="facts">
                    <div class="fact"><span class="lead"><svg><use href="#i-wifi4"/></svg></span></div>
                    <div class="fact"><span class="lead"><svg><use href="#i-freq"/></svg></span></div>
                    <div class="fact"><span class="lead"><svg><use href="#i-lock"/></svg></span><div><div class="ttl muted fact-hidden">Security</div><div class="sub">None</div></div></div>
                    <div class="fact"><span class="lead"><svg><use href="#i-chev"/></svg></span><div><div class="ttl adv">Advanced</div><div class="sub">Network usage, Auto-connect, Network details,…</div></div></div>
                </div>
                <i class="scrim"></i>
                <div class="dialog dialog-short">
                    <div class="dlg-title">AndroidWifi</div>
                    <div class="dlg-adv"><span>Advanced options</span><svg><use href="#i-chev"/></svg></div>
                    <div class="dlg-actions"><span>CANCEL</span><span>SAVE</span></div>
                </div>
                <div class="nav"><i class="nav-back"></i><i class="nav-home"></i><i class="nav-recent"></i></div>
            </section>
        </div>

        <!-- arrows and highlights drawn over the screens -->
        <svg class="marks" width="2960" height="2468" viewBox="0 0 2960 2468">
            <g class="yellow">
                <rect x="102" y="1623" width="116" height="35"/>
                <rect x="102" y="1724" width="116" height="35"/>
            </g>
            <g class="dash">
                <ellipse cx="205.4" cy="626.4" rx="51.7" ry="77.5"/>
                <rect x="639.4" y="233" width="501.3" height="70" rx="16"/>
                <rect x="1216.5" y="193" width="512" height="71" rx="16"/>
                <rect x="1819.5" y="273" width="500.5" height="71" rx="16"/>
                <rect x="2430.8" y="1799" width="436" height="70" rx="16"/>
                <rect x="1850" y="1778.4" width="80" height="56" rx="14"/>
                <rect x="1266" y="1879.5" width="354" height="70.5" rx="16"/>
                <rect x="677.7" y="1779.6" width="413.3" height="207.4" rx="30"/>
                <rect x="79.6" y="1565.5" width="447.4" height="207.2" rx="30"/>
                <ellipse class="dash-small" cx="2821" cy="143" rx="28" ry="28"/>
                <ellipse class="dash-small" cx="476.8" cy="1911" rx="44" ry="38"/>
            </g>
            <g class="line">
                <path d="M267 626H400Q450 626 450 576V317Q450 267 500 267H600"/>
                <path d="M888 223V212Q888 200 900 200H1175"/>
                <path d="M1473 275V295Q1473 309 1487 309H1780"/>
                <path d="M2329 309H2515Q2557 309 2557 267V185Q2557 143 2599 143H2750"/>
                <path d="M2821 179V943Q2821 984 2780 984H2692Q2650 984 2650 1026V1760"/>
                <path d="M2422 1834H2195Q2181 1834 2181 1822Q2181 1807 2167 1807H1980"/>
                <path d="M1840 1807H1800Q1768 1807 1768 1839V1883Q1768 1915 1736 1915H1665"/>
                <path d="M1256 1915H1195Q1180 1915 1180 1900Q1180 1882 1165 1882H1135"/>
                <path d="M668 1882H635Q603 1882 603 1850V1690Q603 1672 585 1672H570"/>
                <path d="M303 1779V1870Q303 1911 344 1911H395"/>
            </g>
            <g class="head">
                <path d="M633 267L585 239.5 596 267 585 297z"/>
                <path d="M1210 200L1163 173 1173 200 1163 229z"/>
                <path d="M1812 309L1764.5 281 1777 309 1764.5 338z"/>
                <path d="M2786 143L2739 114 2748 143 2739 171z"/>
                <path d="M2649 1792L2619 1746 2649 1757 2678 1746z"/>
                <path d="M1937 1807L1984.7 1779 1973 1807 1984.7 1835z"/>
                <path d="M1627 1915L1674.8 1886 1663 1915 1674.8 1944.6z"/>
                <path d="M1099 1882.5L1146 1854 1135 1882.5 1146 1911z"/>
                <path d="M534 1670L581.6 1641 570 1670 581.6 1697z"/>
                <path d="M426.6 1911L379 1882 390 1911 379 1940z"/>
            </g>
        </svg>

        <div class="sticky-shadow">
            <div class="sticky">
                <p>Pictorial for the<br>process of installing<br>the <b>root certificate</b> on<br>an&nbsp; <b>Android</b> emulator.</p>
            </div>
        </div>
    </main>
</body>

</html>
```
FILE: styles.css
```css
* {
    box-sizing: border-box;
}

html,
body {
    margin: 0;
    padding: 0;
}

i {
    font-style: normal;
}

.defs {
    position: absolute;
}

/* whiteboard */
.board {
    position: relative;
    width: 2960px;
    height: 2468px;
    overflow: hidden;
    padding: 36px 0 0 38px;
    background-color: #f3f3f3;
    background-image: linear-gradient(#ebebeb 2px, transparent 2px), linear-gradient(90deg, #ebebeb 2px, transparent 2px);
    background-size: 104.4px 104.4px;
    background-position: 102px 65px;
    font-family: Roboto, "Liberation Sans", sans-serif;
    color: #212121;
}

.band {
    display: flex;
}

.band-bottom {
    margin-top: 66px;
    gap: 49px;
}

.gap-a {
    margin-left: 49px;
}

.gap-b {
    margin-left: 51px;
}

.gap-c {
    margin-left: 52.5px;
}

.gap-d {
    margin-left: 44px;
}

.phone {
    position: relative;
    z-index: 0;
    flex: none;
    width: 537px;
    height: 1163px;
    overflow: hidden;
    background: #fff;
    display: flex;
    flex-direction: column;
    filter: blur(0.5px);
}

.phone.dim,
.gap-b,
.gap-c,
.gap-d {
    background: #fafafa;
}

/* status bar */
.status {
    position: relative;
    z-index: 2;
    flex: none;
    height: 67px;
    padding: 2px 3.5px 0 20px;
    display: flex;
    align-items: center;
    color: #666;
}

.dim .status {
    color: #fff;
}

.tinted {
    background: #dedede;
}

.cam {
    width: 43px;
    height: 44px;
    margin-top: 15px;
    border-radius: 50%;
    background: #000;
}

.time {
    margin-left: 16px;
    font-size: 19.5px;
    letter-spacing: 0.3px;
}

.si {
    width: 20px;
    height: 20px;
    margin-left: 10.5px;
    fill: currentColor;
}

.si-first {
    margin-left: 16px;
}

.bullet {
    width: 6px;
    height: 6px;
    margin-left: 14px;
    border-radius: 50%;
    background: currentColor;
}

.si-pin {
    margin-left: auto;
}

.si-wifi {
    width: 21px;
    margin-left: 9.5px;
}

.si-cell {
    width: 22px;
    margin-left: 0;
}

.si-batt {
    width: 26px;
    height: 26px;
    margin-left: -1px;
}

/* nav bar */
.nav {
    position: absolute;
    z-index: 2;
    left: 0;
    right: 0;
    bottom: 0;
    height: 66px;
    display: grid;
    grid-template-columns: repeat(3, 155px);
    justify-content: center;
    align-items: center;
    justify-items: center;
    border-top: 2px solid #efefef;
}

.phone:first-child:not(.dim) .nav {
    border-top: 0;
}

.dim .nav {
    border-top-color: #555;
}

.nav-veil {
    background: rgba(250, 250, 250, 0.84);
}

.nav-back {
    width: 0;
    height: 0;
    border-style: solid;
    border-width: 12px 19px 12px 0;
    border-color: transparent #555 transparent transparent;
}

.nav-home {
    width: 20px;
    height: 20px;
    border-radius: 50%;
    background: #666;
}

.nav-recent {
    width: 19px;
    height: 19px;
    border-radius: 2px;
    background: #666;
}

.dim .nav-back {
    border-right-color: #c4c4c4;
}

.dim .nav-home,
.dim .nav-recent {
    background: #c4c4c4;
}

.nav-black {
    height: 67px;
    background: #000;
    border-top: 0;
}

.nav-down {
    width: 0;
    height: 0;
    border-style: solid;
    border-width: 18px 11px 0 11px;
    border-color: #bdbdbd transparent transparent transparent;
}

.nav-kbd {
    position: absolute;
    right: 26px;
    top: 24px;
    width: 24px;
    height: 14px;
    fill: #bbb;
}

/* home screen */
.app-search {
    flex: none;
    height: 67px;
    margin: 34px 22px 0 21px;
    border: 2px solid #f1f1f1;
    border-radius: 3px;
    display: flex;
    align-items: center;
    justify-content: center;
    font-size: 22px;
    color: #4f8a7d;
}

.app-search-ico {
    width: 28px;
    height: 28px;
    margin-right: 8px;
    fill: #4f8a7d;
}

.apps {
    margin: 35px 0 0 18px;
    display: grid;
    grid-template-columns: repeat(5, 100px);
    grid-auto-rows: 162px;
}

.app {
    display: flex;
    flex-direction: column;
    align-items: center;
    font-size: 19.5px;
    line-height: 24px;
    color: #444;
}

.disc {
    width: 70px;
    height: 70px;
    margin-bottom: 17px;
    border-radius: 50%;
    background: #fff;
    box-shadow: 0 1px 4px rgba(0, 0, 0, 0.22);
    overflow: hidden;
    display: flex;
    align-items: center;
    justify-content: center;
}

.disc > svg {
    width: 70px;
    height: 70px;
}

.disc-blue {
    background: #6a8fe5;
}

.disc-clock {
    background: #d4d4d8;
}

.disc-teal {
    background: #4f8073;
}

.disc .gear-glyph {
    width: 58px;
    height: 58px;
    fill: #f3f3f3;
}

.disc .phone-glyph {
    width: 54px;
    height: 54px;
    fill: #5aa0e8;
}

/* settings list */
.set-search {
    flex: none;
    height: 66px;
    margin: 22px 22px 0 21px;
    padding: 2px 0 0 24px;
    background: #fff;
    box-shadow: 0 1px 3px rgba(0, 0, 0, 0.25);
    border-radius: 2px;
    display: flex;
    align-items: center;
    font-size: 22px;
    color: #8a8a8a;
}

.set-search-ico {
    width: 28px;
    height: 28px;
    margin-right: 35px;
    fill: #4f8a7d;
}

.set-list {
    padding-top: 23px;
}

.set-row {
    height: 99.5px;
    padding-left: 21px;
    display: flex;
    align-items: center;
    gap: 28px;
    white-space: nowrap;
}

.set-row > div {
    padding-top: 2px;
}

.round {
    flex: none;
    width: 50px;
    height: 50px;
    border-radius: 50%;
    display: flex;
    align-items: center;
    justify-content: center;
}

.round svg {
    width: 30px;
    height: 30px;
    fill: #fff;
}

.c-net { background: #5e97f6; }
.c-dev { background: #92bb4b; }
.c-app { background: #e38c4b; }
.c-bat { background: #528076; }
.c-dis { background: #edb04f; }
.c-snd { background: #6dadac; }
.c-sto { background: #a95fdc; }
.c-pri { background: #6f90e8; }
.c-loc { background: #80c4d8; }
.c-sec { background: #4f8073; }

/* shared text rows */
.ttl {
    font-size: 22px;
    line-height: 27px;
    color: #212121;
}

.sub {
    font-size: 19.4px;
    line-height: 27px;
    color: #7a7a7a;
    white-space: nowrap;
}

.muted {
    color: #757575;
}

.adv {
    font-size: 20px;
}

.bar {
    flex: none;
    height: 77.5px;
    padding: 2.5px 18px 0 24px;
    display: flex;
    align-items: center;
    background: #fafafa;
    box-shadow: 0 1px 3px rgba(0, 0, 0, 0.12);
    position: relative;
}

.bar-flat {
    background: none;
    box-shadow: none;
}

.bar-ico {
    flex: none;
    width: 29px;
    height: 29px;
    fill: #212121;
}

.bar-title {
    margin: 3px 0 0 46px;
    font-size: 27.3px;
    font-weight: 500;
}

.bar-last {
    margin-left: auto;
    width: 30px;
    height: 30px;
}

.bar-edit {
    margin-left: auto;
    width: 36px;
    height: 36px;
}

.bar-edit + .bar-last {
    margin-left: 32px;
}

.row {
    flex: none;
    height: 99px;
    padding-top: 2px;
    display: flex;
    align-items: center;
}

.row-one {
    height: 74px;
}

.row-adv {
    height: 95px;
}

.row-conn {
    height: 98px;
    margin-top: 7px;
    border-bottom: 2px solid #ececec;
}

.row-note {
    height: 71px;
}

.row-add {
    height: 72px;
    border-bottom: 2px solid #ececec;
}

.lead {
    flex: none;
    width: 99px;
    padding-left: 22px;
    display: flex;
    align-items: center;
}

.lead svg {
    width: 32px;
    height: 32px;
    fill: #757575;
    color: #757575;
}

.vline {
    width: 1px;
    height: 57px;
    margin-left: auto;
    background: #e4e4e4;
}

.toggle {
    position: relative;
    flex: none;
    width: 45px;
    height: 18px;
    border-radius: 9px;
}

.toggle b {
    position: absolute;
    top: -4px;
    width: 26px;
    height: 26px;
    border-radius: 50%;
    box-shadow: 0 1px 3px rgba(0, 0, 0, 0.3);
}

.toggle-on {
    margin: 0 26px 0 38px;
    background: #c4dbd5;
}

.toggle-on b {
    right: 0;
    background: #4f8478;
}

.toggle-off {
    margin: 0 38px 0 auto;
    background: #bdbdbd;
}

.toggle-off b {
    left: 0;
    background: #f3f3f3;
}

.use-wifi {
    flex: none;
    height: 75.5px;
    padding: 2px 27px 0 99px;
    display: flex;
    align-items: center;
    justify-content: space-between;
    background: #527e73;
    color: #fff;
    font-size: 22px;
    font-weight: 500;
}

.toggle-white {
    width: 41px;
    background: #8eb0a8;
}

.toggle-white b {
    right: 0;
    background: #fff;
}

.teal-ico {
    flex: none;
    width: 30px;
    height: 30px;
    margin-right: 30px;
    fill: #4f8478;
    color: #4f8478;
}

.gear-end {
    width: 36px;
    height: 36px;
    margin: 0 27px 0 auto;
}

.vline-add {
    margin-right: 29px;
    height: 46px;
}

/* network details */
.hero {
    flex: none;
    height: 343px;
    background: #dedede;
    display: flex;
    flex-direction: column;
    align-items: center;
}

.hero > .status,
.hero > .bar {
    align-self: stretch;
}

.hero-ico {
    flex: none;
    width: 44px;
    height: 44px;
    margin-top: 42px;
    fill: #1c1c1c;
}

.hero-name {
    margin-top: 26px;
    font-size: 26.8px;
    font-weight: 500;
    line-height: 34px;
}

.hero-state {
    margin-top: 4.5px;
    font-size: 19px;
    line-height: 27px;
    color: #7a7a7a;
}

.actions {
    flex: none;
    height: 118px;
    padding: 28.5px 0 0 6px;
    display: grid;
    grid-template-columns: repeat(3, 175px);
    border-bottom: 2px solid #e6e6e6;
}

.action {
    display: flex;
    flex-direction: column;
    align-items: center;
    font-size: 19px;
    font-weight: 500;
    line-height: 24px;
    color: #4f8a7d;
}

.action svg {
    width: 28px;
    height: 28px;
    margin-bottom: 10.5px;
    fill: #4f8a7d;
    color: #4f8a7d;
}

.facts {
    padding-top: 2px;
}

.facts-low {
    margin-top: 116px;
    border-top: 2px solid #e6e6e6;
}

.fact {
    height: 98.7px;
    display: flex;
    align-items: center;
}

.fact-hidden {
    visibility: hidden;
}

.fact > div {
    padding-top: 1px;
}

/* dialogs */
.scrim {
    position: absolute;
    z-index: 1;
    inset: 0;
    background: rgba(0, 0, 0, 0.59);
}

.dialog {
    position: absolute;
    z-index: 2;
    left: 36px;
    width: 465px;
    padding: 0 0 0 33.5px;
    background: #fafafa;
    border-radius: 2px;
    box-shadow: 0 8px 24px rgba(0, 0, 0, 0.3);
    display: flex;
    flex-direction: column;
    overflow: hidden;
}

.dialog-typed {
    top: 90.5px;
    height: 597px;
}

.dialog-long {
    top: 130.5px;
    height: 904px;
}

.dialog-mid {
    top: 336px;
    height: 493px;
    overflow: visible;
}

.dialog-short {
    top: 463.5px;
    height: 239px;
}

.dlg-title {
    flex: none;
    height: 34px;
    margin-top: 27.5px;
    font-size: 26.5px;
    font-weight: 500;
    line-height: 34px;
}

.dlg-title-tight {
    margin-top: 27px;
}

.dlg-rule {
    flex: none;
    height: 1px;
    margin: 1px 0 0 -34px;
    background: #e0e0e0;
}

.dlg-rule-foot {
    margin-top: 0;
}

.dlg-label {
    flex: none;
    margin-top: 24px;
    font-size: 19px;
    line-height: 24px;
    color: #8a8a8a;
}

.dlg-title + .dlg-label {
    margin-top: 29.5px;
}

.dlg-label.dlg-next,
.dlg-value + .dlg-label {
    margin-top: 30.5px;
}

.dlg-value {
    flex: none;
    height: 30px;
    margin-top: 18.5px;
    padding-right: 48px;
    display: flex;
    align-items: center;
    justify-content: space-between;
    font-size: 22px;
    color: #262626;
}

.dlg-value-first {
    margin-top: 5px;
}

.dlg-blank {
    justify-content: flex-end;
}

.dlg-value-hidden {
    justify-content: flex-end;
    margin-top: 73px;
}

.caret {
    width: 0;
    height: 0;
    border-style: solid;
    border-width: 7px 7px 0 7px;
    border-color: #757575 transparent transparent transparent;
}

.dlg-text {
    flex: none;
    margin: 57px 20px 0 -12px;
    font-size: 21.9px;
    line-height: 26px;
    color: #262626;
}

.dlg-value-first + .dlg-text {
    margin-top: 56.5px;
}

.field {
    flex: none;
    height: 55px;
    margin-right: 27.5px;
    padding-top: 19.5px;
    overflow: hidden;
    border-bottom: 2px solid #a8a8a8;
    font-size: 25px;
    line-height: 30px;
    white-space: nowrap;
    color: #212121;
}

.field-hint {
    color: #7e7e7e;
}

.field-active {
    border-bottom-color: #4f8478;
}

.field-open {
    border-bottom: 0;
    height: 52.5px;
}

.dlg-actions {
    flex: none;
    margin-top: auto;
    margin-bottom: 29.4px;
    padding-right: 35.5px;
    display: flex;
    justify-content: flex-end;
    gap: 38px;
    font-size: 19px;
    font-weight: 500;
    line-height: 24px;
    color: #4f8a7d;
}

.dlg-actions-off span:last-child {
    color: #cfd8d6;
}

.dlg-scroll {
    position: absolute;
    right: 0;
    top: 163px;
    width: 6px;
    height: 268px;
    background: #c4c4c4;
}

.dlg-adv {
    flex: none;
    height: 30px;
    margin-top: 29.5px;
    padding-right: 29px;
    display: flex;
    align-items: center;
    justify-content: space-between;
    font-size: 19px;
    color: #424242;
}

.dlg-adv svg {
    width: 30px;
    height: 30px;
    fill: #757575;
}

.menu {
    position: absolute;
    left: 22px;
    top: 218px;
    width: 355px;
    height: 196px;
    padding: 0 12px;
    background: #fafafa;
    box-shadow: 0 6px 16px rgba(0, 0, 0, 0.35);
    display: grid;
    grid-auto-rows: 65.5px;
    align-items: center;
    font-size: 22px;
    color: #262626;
}

/* keyboard */
.keyboard {
    position: absolute;
    z-index: 2;
    left: 0;
    right: 0;
    top: 710px;
    height: 387px;
    background: #ecf0f2;
}

.kb-strip {
    height: 54px;
    padding: 0 9px 0 188px;
    background: #e2e7ea;
    display: flex;
    align-items: center;
}

.kb-strip i {
    flex: none;
    width: 2px;
    height: 32px;
    margin-right: 156px;
    background: #cfd5d9;
}

.kb-strip i + i {
    margin-right: 0;
}

.kb-strip svg {
    flex: none;
    width: 32px;
    height: 32px;
    margin-left: auto;
    fill: #5f6b72;
}

.kb-row {
    height: 82px;
    display: flex;
    font-size: 31px;
    color: #4a5a62;
}

.kb-row-a {
    padding-left: 26.85px;
}

.kb-row-last {
    color: #5c6a72;
}

.key {
    position: relative;
    flex: none;
    width: 53.7px;
    display: flex;
    align-items: center;
    justify-content: center;
}

.key sup {
    position: absolute;
    right: 3px;
    top: 7px;
    font-size: 15px;
    line-height: 20px;
    color: #66757d;
}

.key-wide {
    width: 80.5px;
}

.key-sym {
    width: 80.5px;
    font-size: 20px;
}

.kb-shift {
    width: 38px;
    height: 38px;
    fill: #8b969c;
}

.kb-del {
    width: 34px;
    height: 24px;
    fill: #8b969c;
}

.kb-space {
    flex: none;
    width: 268.5px;
    padding: 0 5px;
    display: flex;
    align-items: center;
}

.kb-space i {
    width: 100%;
    height: 31px;
    border-radius: 5px;
    background: #d0d6da;
}

.kb-go {
    width: 49px;
    height: 48px;
    border-radius: 50%;
    background: #7ab0a5;
    color: #fff;
    font-size: 24px;
    line-height: 46px;
    text-align: center;
}

/* overlay marks */
.marks {
    position: absolute;
    z-index: 3;
    left: 0;
    top: 0;
}

.yellow rect {
    fill: none;
    stroke: #dce36d;
    stroke-width: 5;
}

.dash > * {
    fill: none;
    stroke: #d35f3f;
    stroke-width: 10;
    stroke-dasharray: 10.5 10.5;
}

.dash > .dash-small {
    stroke-width: 9;
    stroke-dasharray: 10 10;
}

.line path {
    fill: none;
    stroke: #7b2fa3;
    stroke-width: 6;
}

.head path {
    fill: #7b2fa3;
    stroke: #7b2fa3;
    stroke-width: 5;
    stroke-linejoin: round;
}

/* sticky note */
.sticky-shadow {
    position: absolute;
    z-index: 4;
    left: 985px;
    top: 846px;
    width: 992px;
    height: 536px;
    filter: drop-shadow(0 16px 26px rgba(0, 0, 0, 0.3));
}

.sticky {
    height: 100%;
    padding-top: 21px;
    background: linear-gradient(205deg, #d9ef96 0, #dcf19a 22%, #def39f 40%, #ddf29c 100%);
    clip-path: polygon(0 0, 99.2% 0.5%, 100% 100%, 0 100%);
    text-align: center;
}

.sticky p {
    margin: 0;
    padding-right: 6px;
    font-family: "Open Sans", "Liberation Sans", sans-serif;
    font-size: 81px;
    line-height: 113px;
    color: #1c1c1c;
    white-space: nowrap;
}
```
